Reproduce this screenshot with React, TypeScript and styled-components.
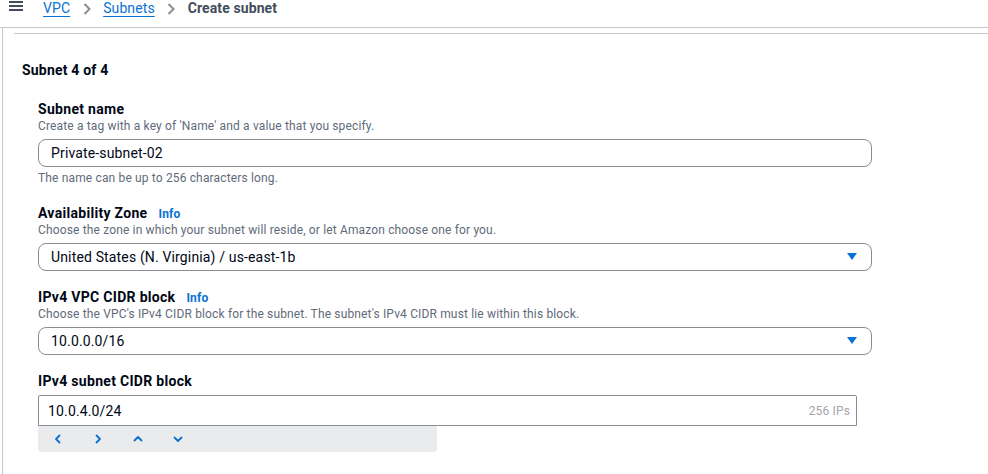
import React from "react";
import styled, { createGlobalStyle } from "styled-components";

const Global = createGlobalStyle`
  html, body { margin: 0; padding: 0; background: #ffffff; }
  body { font-family: Roboto, "Open Sans", Arial, sans-serif; color: #000716; }
  * { box-sizing: border-box; }
`;

const Page = styled.div`
  width: 988px;
  height: 474px;
  overflow: hidden;
  background: #fff;
`;

const Header = styled.div`
  height: 28px;
  display: flex;
  align-items: flex-start;
  border-bottom: 1px solid #c6c6cd;
  padding-left: 9px;
`;

const Burger = styled.div`
  width: 14px;
  margin-top: 1px;
  display: flex;
  flex-direction: column;
  gap: 2px;
  span {
    display: block;
    height: 2px;
    background: #414d5c;
  }
`;

const Crumbs = styled.nav`
  display: flex;
  align-items: flex-start;
  margin-left: 20px;
  font-size: 14px;
  line-height: 16px;
  letter-spacing: 0.1px;
`;

const CrumbLink = styled.a`
  color: #0972d3;
  text-decoration: underline;
  text-underline-offset: 3px;
  text-decoration-thickness: 1px;
  cursor: pointer;
`;

const CrumbCurrent = styled.span`
  color: #414d5c;
  font-weight: 700;
`;

const Sep = styled.span`
  display: inline-flex;
  width: 33px;
  justify-content: center;
  padding-top: 3px;
`;

const Panel = styled.div`
  margin-left: 2px;
  border-left: 1px solid #c6c6cd;
  height: 446px;
  padding-top: 5px;
`;

const Divider = styled.div`
  margin-left: 11px;
  height: 1px;
  background: #c6c6cd;
`;

const Section = styled.div`
  padding: 27px 0 0 19px;
`;

const Heading = styled.h2`
  margin: 0;
  font-size: 14px;
  line-height: 18px;
  font-weight: 700;
  letter-spacing: 0.2px;
  color: #000716;
`;

const Fields = styled.div`
  margin-top: 21px;
  padding-left: 16px;
  display: flex;
  flex-direction: column;
  gap: 17px;
`;

const Field = styled.div`
  display: flex;
  flex-direction: column;
`;

const LabelRow = styled.div`
  display: flex;
  align-items: baseline;
  gap: 11px;
  height: 18px;
`;

const Label = styled.label`
  font-size: 14px;
  line-height: 18px;
  font-weight: 700;
  letter-spacing: 0.3px;
  color: #000716;
`;

const Info = styled.a`
  font-size: 12px;
  font-weight: 700;
  letter-spacing: 0.2px;
  color: #0972d3;
  cursor: pointer;
`;

const Desc = styled.div`
  font-size: 12px;
  line-height: 17px;
  letter-spacing: 0.15px;
  color: #5f6b7a;
`;

const Control = styled.div<{ $width: number; $square?: boolean; $top?: number }>`
  width: ${(p) => p.$width}px;
  height: ${(p) => (p.$square ? 31 : 28)}px;
  margin-top: ${(p) => p.$top ?? 4}px;
  border: 1px solid #8c8c94;
  border-radius: ${(p) => (p.$square ? "2px 2px 0 0" : "8px")};
  display: flex;
  align-items: center;
  justify-content: space-between;
  padding: ${(p) => (p.$square ? "0 6px 0 9px" : "0 14px 0 12px")};
  font-size: 14px;
  letter-spacing: 0.15px;
  color: #000716;
`;

const Value = styled.span`
  line-height: 18px;
`;

const Suffix = styled.span`
  font-size: 12px;
  color: #a4a4ad;
`;

const Help = styled.div`
  margin-top: 3px;
  font-size: 12px;
  line-height: 17px;
  letter-spacing: 0.15px;
  color: #5f6b7a;
`;

const Toolbar = styled.div`
  width: 399px;
  height: 26px;
  background: #e9ebed;
  border-radius: 0 0 4px 4px;
  display: flex;
  align-items: center;
`;

const ToolBtn = styled.button`
  width: 40px;
  height: 26px;
  border: 0;
  background: transparent;
  padding: 0;
  display: flex;
  align-items: center;
  justify-content: center;
  cursor: pointer;
`;

const Chevron = ({ d }: { d: string }) => (
  <svg width="12" height="12" viewBox="0 0 12 12" fill="none">
    <path d={d} stroke="#0972d3" strokeWidth="1.8" strokeLinecap="round" strokeLinejoin="round" />
  </svg>
);

const SepIcon = () => (
  <svg width="8" height="12" viewBox="0 0 8 12" fill="none">
    <path d="M1.5 1 L6.5 6 L1.5 11" stroke="#8c8c94" strokeWidth="2" />
  </svg>
);

const Caret = () => (
  <svg width="10" height="8" viewBox="0 0 10 8">
    <path d="M0 0 H10 L5 7 Z" fill="#0972d3" />
  </svg>
);

export default function App() {
  return (
    <Page>
      <Global />
      <Header>
        <Burger>
          <span />
          <span />
          <span />
        </Burger>
        <Crumbs>
          <CrumbLink>VPC</CrumbLink>
          <Sep>
            <SepIcon />
          </Sep>
          <CrumbLink>Subnets</CrumbLink>
          <Sep>
            <SepIcon />
          </Sep>
          <CrumbCurrent>Create subnet</CrumbCurrent>
        </Crumbs>
      </Header>
      <Panel>
        <Divider />
        <Section>
          <Heading>Subnet 4 of 4</Heading>
          <Fields>
            <Field>
              <LabelRow>
                <Label>Subnet name</Label>
              </LabelRow>
              <Desc>Create a tag with a key of 'Name' and a value that you specify.</Desc>
              <Control $width={834}>
                <Value>Private-subnet-02</Value>
              </Control>
              <Help>The name can be up to 256 characters long.</Help>
            </Field>
            <Field>
              <LabelRow>
                <Label>Availability Zone</Label>
                <Info>Info</Info>
              </LabelRow>
              <Desc>Choose the zone in which your subnet will reside, or let Amazon choose one for you.</Desc>
              <Control $width={834}>
                <Value>United States (N. Virginia) / us-east-1b</Value>
                <Caret />
              </Control>
            </Field>
            <Field>
              <LabelRow>
                <Label>IPv4 VPC CIDR block</Label>
                <Info>Info</Info>
              </LabelRow>
              <Desc>Choose the VPC's IPv4 CIDR block for the subnet. The subnet's IPv4 CIDR must lie within this block.</Desc>
              <Control $width={834}>
                <Value>10.0.0.0/16</Value>
                <Caret />
              </Control>
            </Field>
            <Field>
              <LabelRow>
                <Label>IPv4 subnet CIDR block</Label>
              </LabelRow>
              <Control $width={819} $square $top={5}>
                <Value>10.0.4.0/24</Value>
                <Suffix>256 IPs</Suffix>
              </Control>
              <Toolbar>
                <ToolBtn aria-label="Previous">
                  <Chevron d="M7.5 2.5 L4 6 L7.5 9.5" />
                </ToolBtn>
                <ToolBtn aria-label="Next">
                  <Chevron d="M4.5 2.5 L8 6 L4.5 9.5" />
                </ToolBtn>
                <ToolBtn aria-label="Up">
                  <Chevron d="M2.5 7.5 L6 4 L9.5 7.5" />
                </ToolBtn>
                <ToolBtn aria-label="Down">
                  <Chevron d="M2.5 4.5 L6 8 L9.5 4.5" />
                </ToolBtn>
              </Toolbar>
            </Field>
          </Fields>
        </Section>
      </Panel>
    </Page>
  );
}
